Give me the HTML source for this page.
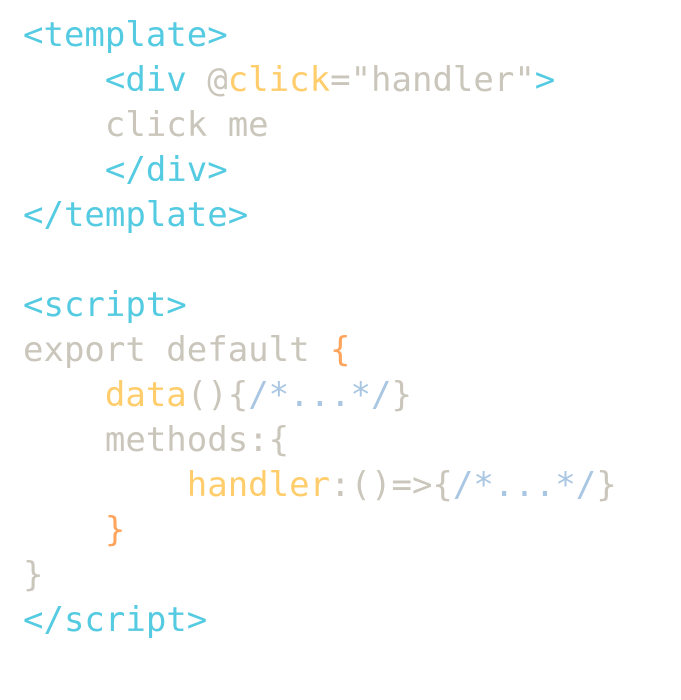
<!DOCTYPE html>
<html><head><meta charset="utf-8"><style>
html,body{margin:0;padding:0;background:#fff;width:681px;height:700px;overflow:hidden}
pre{margin:0;position:absolute;left:23px;top:13px;font-family:"DejaVu Sans Mono","Liberation Mono",monospace;font-size:34px;line-height:45px;color:#cac6bb}
.t{color:#55cbe2}.y{color:#ffcd6b}.o{color:#ffa45c}.c{color:#a9c6e2}
</style></head><body>
<pre><span class="t">&lt;template&gt;</span>
    <span class="t">&lt;div</span> @<span class="y">click</span>="handler"<span class="t">&gt;</span>
    click me
    <span class="t">&lt;/div&gt;</span>
<span class="t">&lt;/template&gt;</span>

<span class="t">&lt;script&gt;</span>
export default <span class="o">{</span>
    <span class="y">data</span>(){<span class="c">/*...*/</span>}
    methods:{
        <span class="y">handler</span>:()=&gt;{<span class="c">/*...*/</span>}
    <span class="o">}</span>
}
<span class="t">&lt;/script&gt;</span></pre>
</body></html>
